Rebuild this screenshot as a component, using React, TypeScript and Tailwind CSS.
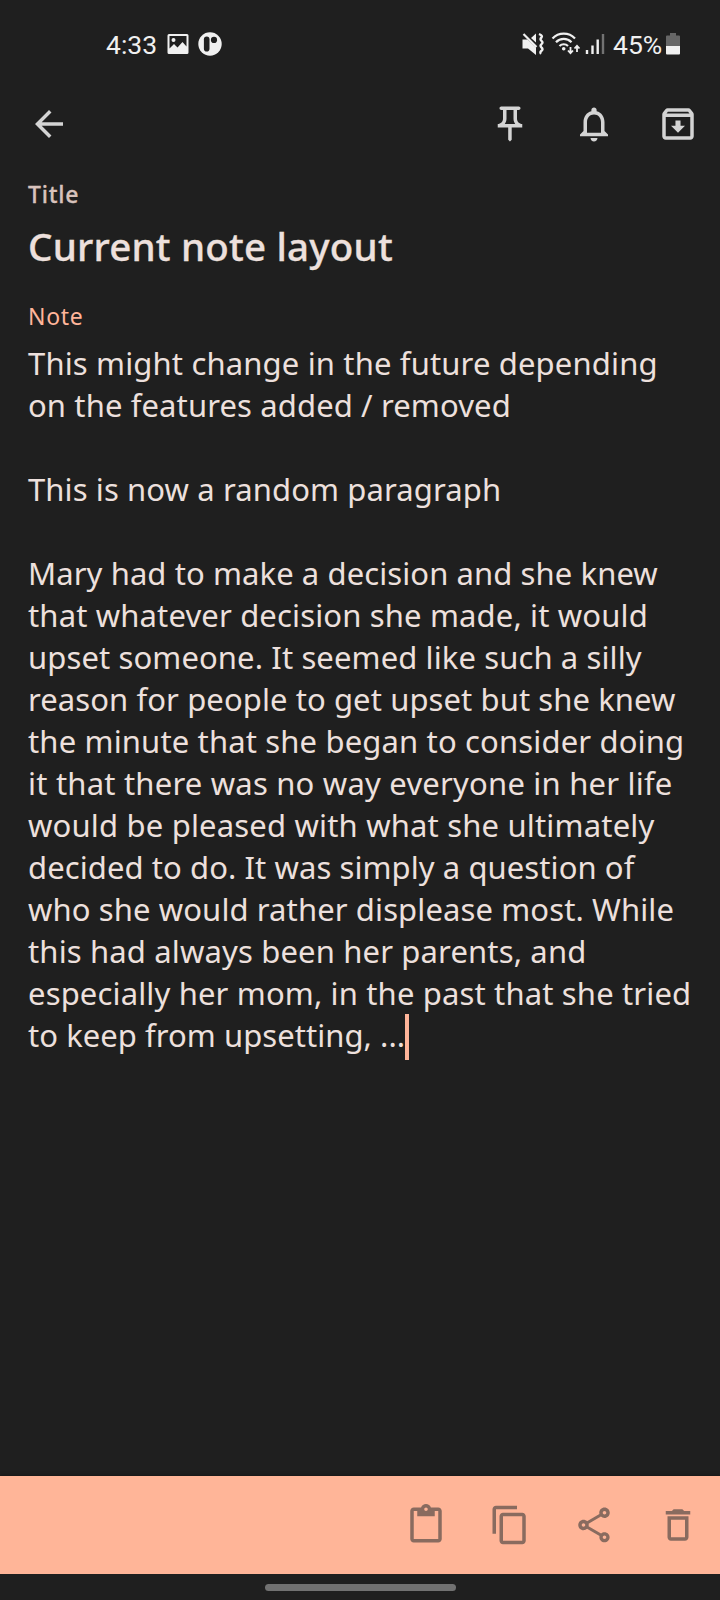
import type { ReactNode } from "react";
import {
  MdArrowBack,
  MdContentCopy,
  MdContentPaste,
  MdDeleteOutline,
  MdNotificationsNone,
  MdOutlineArchive,
  MdOutlinePushPin,
  MdOutlineShare,
} from "react-icons/md";

const noteLines = [
  { text: "This might change in the future depending", tracking: "tracking-[0.15px]" },
  { text: "on the features added / removed", tracking: "tracking-[0.12px]" },
  { text: "", tracking: "tracking-[0.15px]" },
  { text: "This is now a random paragraph", tracking: "tracking-[0.11px]" },
  { text: "", tracking: "tracking-[0.15px]" },
  { text: "Mary had to make a decision and she knew", tracking: "tracking-[0.09px]" },
  { text: "that whatever decision she made, it would", tracking: "tracking-[0.15px]" },
  { text: "upset someone. It seemed like such a silly", tracking: "tracking-[0.11px]" },
  { text: "reason for people to get upset but she knew", tracking: "tracking-[0.09px]" },
  { text: "the minute that she began to consider doing", tracking: "tracking-[0.15px]" },
  { text: "it that there was no way everyone in her life", tracking: "tracking-[0.21px]" },
  { text: "would be pleased with what she ultimately", tracking: "tracking-[0.18px]" },
  { text: "decided to do. It was simply a question of", tracking: "tracking-[0.08px]" },
  { text: "who she would rather displease most. While", tracking: "tracking-[0.11px]" },
  { text: "this had always been her parents, and", tracking: "tracking-[0.15px]" },
  { text: "especially her mom, in the past that she tried", tracking: "tracking-[0.15px]" },
];

function StatusBar() {
  return (
    <header className="flex h-[88px] items-center justify-between pr-10 pl-[106px] font-['Roboto',sans-serif] text-[26.5px] leading-none text-[#f0f0f0]">
      <div className="flex items-center">
        <span className="w-[61px] pt-[2px] whitespace-nowrap">4:33</span>
        <svg className="h-[22px] w-[22px]" viewBox="0 0 22 22">
          <path
            fill="currentColor"
            fillRule="evenodd"
            d="M2 1h18a1.500 1.500 0 0 1 1.500 1.500v17a1.500 1.500 0 0 1-1.500 1.500H2a1.500 1.500 0 0 1-1.500-1.500v-17A1.500 1.500 0 0 1 2 1zM2.500 3v12.500l4.500-4.500 3.500 3.500L15.500 9l4 4.500V3zM6.500 5a2 2 0 1 1 0 4a2 2 0 1 1 0-4z"
          />
        </svg>
        <svg className="ml-[9px] h-6 w-6" viewBox="0 0 24 24">
          <circle cx="12" cy="12" r="11.700" fill="currentColor" />
          <rect x="5.900" y="4.500" width="5.600" height="15" rx="2.800" fill="#202020" />
          <circle cx="16" cy="7.900" r="3.100" fill="#202020" />
        </svg>
      </div>
      <div className="flex items-center">
        <svg className="h-6 w-[85px]" viewBox="521 32 85 24" fill="none" stroke="currentColor">
          <path d="M522.500 39.500h5l8.500 8V55l-8-6.500h-5.500z" fill="currentColor" stroke="none" />
          <path d="M531 38L536 33.500V42.500z" fill="currentColor" stroke="none" />
          <path d="M523.500 34L536.500 47" strokeWidth="2.200" />
          <path d="M539 34q4 1.600 2.500 3.500q-2 1.800 0 3.300q2 1.700 0 3.400q-2 1.600 0 3.300q2 1.600 0 3.300q-2 1.500-.5 3" strokeWidth="2.400" />
          <path d="M552.500 38.500a15.500 15.500 0 0 1 22.500 0M556 42.300a10.500 10.500 0 0 1 15.500 0M559.500 46a6 6 0 0 1 8.500 0" strokeWidth="2.200" />
          <circle cx="563.700" cy="48.800" r="1.800" fill="currentColor" stroke="none" />
          <path d="M570.500 47v6M568 50.500l2.500 2.700 2.500-2.700M577 52v-6M574.500 48.500l2.500-2.700 2.500 2.700" strokeWidth="1.800" />
          <path d="M587 50v4M592.500 45.500v8.500M597.700 39.500V54" strokeWidth="2.400" />
          <path d="M603 34v20" stroke="#727272" strokeWidth="2.400" />
        </svg>
        <span className="ml-[7px] w-[53px] pt-[2px] whitespace-nowrap">45%</span>
        <svg className="h-[22px] w-[14px]" viewBox="0 0 14 22">
          <path d="M4 0h6v2.500h3a1 1 0 0 1 1 1V13H0V3.500a1 1 0 0 1 1-1h3z" fill="#666666" />
          <path d="M0 13h14v7.500a1 1 0 0 1-1 1H1a1 1 0 0 1-1-1z" fill="#f0f0f0" />
        </svg>
      </div>
    </header>
  );
}

function IconButton({ label, children }: { label: string; children: ReactNode }) {
  return (
    <button type="button" aria-label={label} className="size-[42px] shrink-0">
      {children}
    </button>
  );
}

export default function App() {
  return (
    <div className="flex h-[1600px] w-[720px] flex-col overflow-hidden bg-[#1f1f1f] font-['Noto_Sans',sans-serif]">
      <StatusBar />
      <nav className="mt-[15px] flex h-[42px] items-center gap-[42px] pr-[21px] pl-7 text-[#d4d4d4]">
        <IconButton label="Back"><MdArrowBack size={42} /></IconButton>
        <div className="flex-1" />
        <IconButton label="Pin"><MdOutlinePushPin size={42} /></IconButton>
        <IconButton label="Remind"><MdNotificationsNone size={42} /></IconButton>
        <IconButton label="Archive"><MdOutlineArchive size={42} /></IconButton>
      </nav>
      <main className="flex flex-1 flex-col pl-7 text-[#ede0dd]">
        <div className="mt-[33px] h-8 text-[23px] leading-8 font-medium tracking-[0.8px] text-[#d8c2bc] [-webkit-text-stroke:0.3px_#d8c2bc]">Title</div>
        <h1 className="mt-2 h-[56px] text-[38.5px] leading-[56px] font-medium tracking-[0.2px] whitespace-nowrap [-webkit-text-stroke:0.3px_#ede0dd]">Current note layout</h1>
        <div className="mt-[26px] h-8 text-[23px] leading-8 tracking-[0.7px] text-[#ffb59a]">Note</div>
        <div className="mt-[10px] text-[31px] leading-[42px] whitespace-nowrap">
          {noteLines.map((line, i) => (
            <p key={i} className={`h-[42px] ${line.tracking}`}>{line.text}</p>
          ))}
          <p className="flex h-[42px] tracking-[0.05px]">
            <span>to keep from upsetting, ...</span>
            <span className="h-[46px] w-1 shrink-0 bg-[#ffb59a]" />
          </p>
        </div>
      </main>
      <footer>
        <div className="flex h-[98px] items-center justify-end gap-[42px] bg-[#ffb598] pr-[21px] text-[#896b5f] shadow-[0_0_4px_rgba(0,0,0,0.4)]">
          <IconButton label="Paste"><MdContentPaste size={42} /></IconButton>
          <IconButton label="Copy"><MdContentCopy size={42} /></IconButton>
          <IconButton label="Share"><MdOutlineShare size={42} /></IconButton>
          <IconButton label="Delete"><MdDeleteOutline size={42} /></IconButton>
        </div>
        <div className="relative flex h-[26px] justify-center bg-[#1f1f1f] pt-[10px]">
          <div className="h-[7px] w-[191px] rounded-full bg-[#717171]" />
        </div>
      </footer>
    </div>
  );
}
